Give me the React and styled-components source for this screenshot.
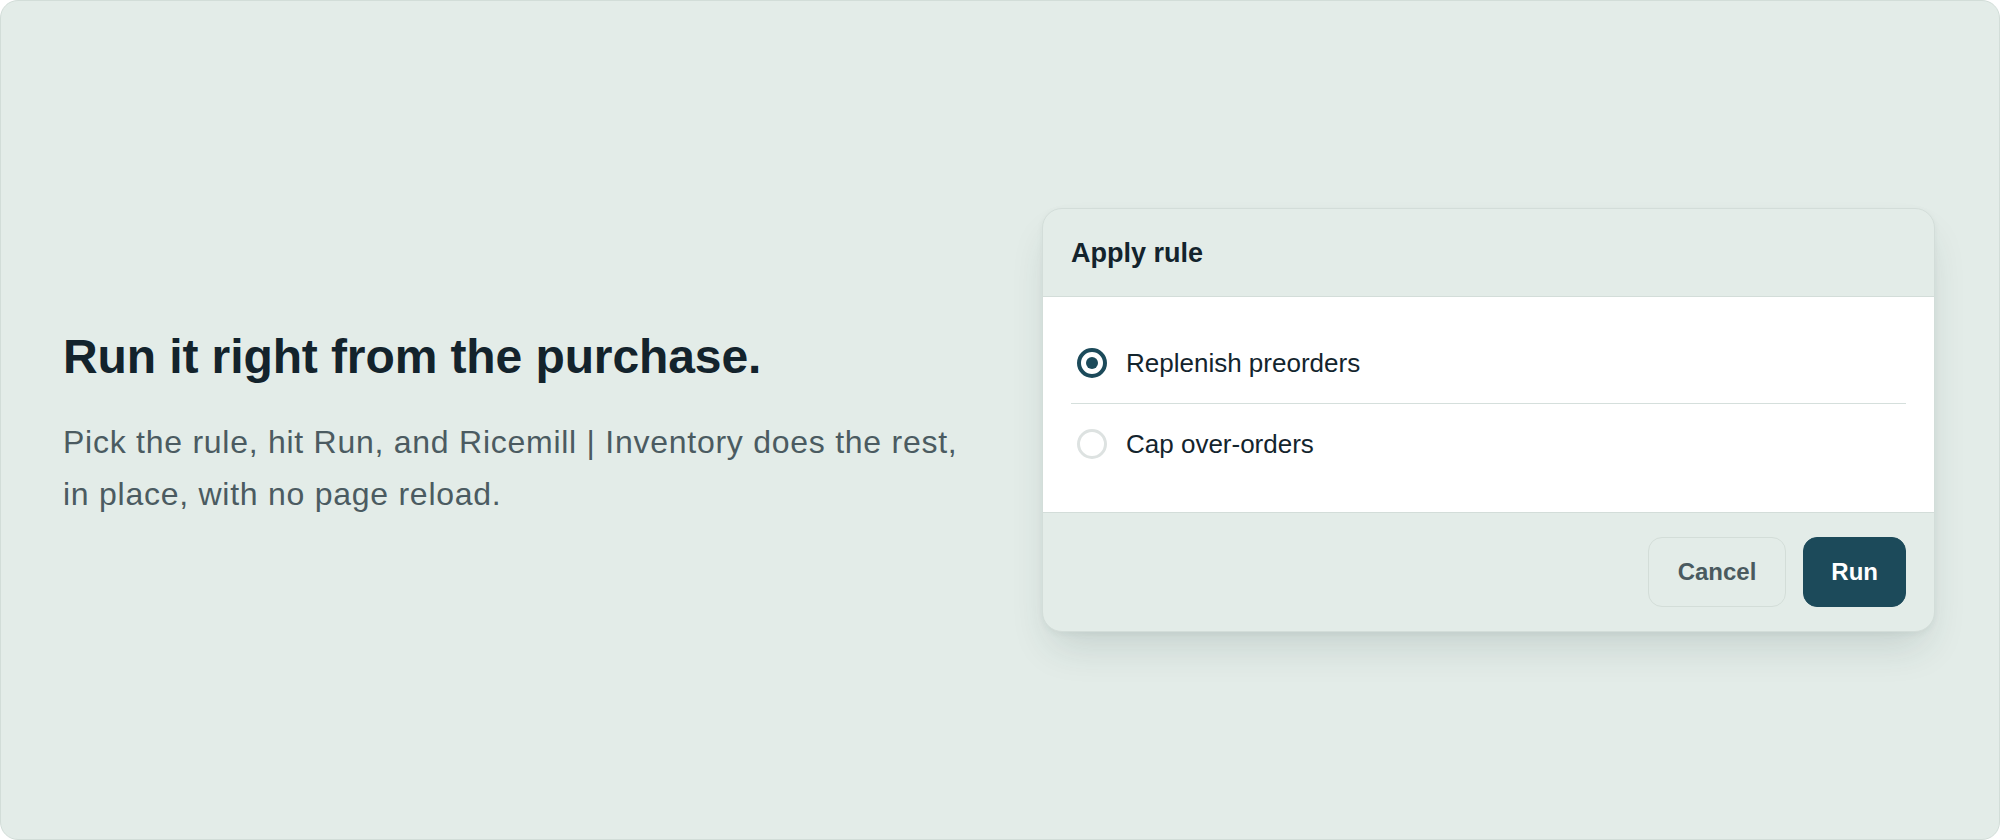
import React, { useState } from 'react'
import styled, { createGlobalStyle } from 'styled-components'

const GlobalStyle = createGlobalStyle`
  html, body {
    margin: 0;
    padding: 0;
    background: #ffffff;
  }
  body {
    font-family: "Liberation Sans", Arial, Helvetica, sans-serif;
    -webkit-font-smoothing: antialiased;
  }
  * {
    box-sizing: border-box;
  }
`

const Page = styled.main`
  width: 2000px;
  height: 840px;
  display: flex;
  align-items: center;
  justify-content: space-between;
  padding: 0 64px 0 62px;
  background: #e3ece8;
  border: 1px solid #d2ddd8;
  border-radius: 18px;
  overflow: hidden;
`

const Copy = styled.section`
  max-width: 920px;
  padding-top: 8px;
`

const Heading = styled.h1`
  margin: 0 0 30px;
  font-size: 48px;
  line-height: 1.2;
  font-weight: 700;
  letter-spacing: -0.1px;
  color: #13232c;
`

const Lead = styled.p`
  margin: 0;
  font-size: 32px;
  line-height: 52px;
  letter-spacing: 0.74px;
  color: #4b5b61;
`

const Dialog = styled.div`
  width: 893px;
  flex-shrink: 0;
  background: #e3ece8;
  border: 1px solid #d3ddd9;
  border-radius: 20px;
  overflow: hidden;
  box-shadow: 0 22px 40px -10px rgba(30, 60, 60, 0.16), 0 2px 6px rgba(30, 60, 60, 0.05);
`

const DialogHeader = styled.header`
  padding: 28px 28px 27px;
  border-bottom: 1px solid #d3ddd9;
`

const DialogTitle = styled.h2`
  margin: 0;
  font-size: 27px;
  line-height: 32px;
  font-weight: 700;
  color: #13232c;
`

const DialogBody = styled.div`
  background: #ffffff;
  padding: 26px 28px 28px;
`

const Option = styled.label`
  display: flex;
  align-items: center;
  gap: 19px;
  height: 80px;
  cursor: pointer;
  font-size: 26px;
  color: #13242d;

  & + & {
    height: 81px;
    border-top: 1px solid #d5dfdc;
  }
`

const Radio = styled.span`
  width: 30px;
  height: 30px;
  margin-left: 6px;
  flex-shrink: 0;
  border-radius: 50%;
  border: ${(p) => (p.$checked ? '4.5px solid #1c4a5a' : '3.5px solid #dde2e1')};
  background: #ffffff;
  display: flex;
  align-items: center;
  justify-content: center;

  &::after {
    content: '';
    width: 12px;
    height: 12px;
    border-radius: 50%;
    background: ${(p) => (p.$checked ? '#1c4a5a' : 'transparent')};
  }
`

const DialogFooter = styled.footer`
  display: flex;
  justify-content: flex-end;
  gap: 17px;
  padding: 24px 28px;
  border-top: 1px solid #d3ddd9;
`

const Button = styled.button`
  height: 70px;
  padding: 0 ${(p) => (p.$primary ? '27px' : '29px')};
  border-radius: 14px;
  font-family: inherit;
  font-size: 24px;
  font-weight: 700;
  cursor: pointer;
  border: 1px solid ${(p) => (p.$primary ? '#1c4a5a' : '#d3ddd8')};
  background: ${(p) => (p.$primary ? '#1c4a5a' : 'transparent')};
  color: ${(p) => (p.$primary ? '#ffffff' : '#4a5a5f')};
`

const rules = ['Replenish preorders', 'Cap over-orders']

export default function App() {
    const [selected, setSelected] = useState(0)

    return (
        <>
            <GlobalStyle />
            <Page>
                <Copy>
                    <Heading>Run it right from the purchase.</Heading>
                    <Lead>
                        Pick the rule, hit Run, and Ricemill | Inventory does the rest,
                        <br />
                        in place, with no page reload.
                    </Lead>
                </Copy>

                <Dialog>
                    <DialogHeader>
                        <DialogTitle>Apply rule</DialogTitle>
                    </DialogHeader>
                    <DialogBody>
                        {rules.map((rule, i) => (
                            <Option key={rule} onClick={() => setSelected(i)}>
                                <Radio $checked={selected === i} />
                                {rule}
                            </Option>
                        ))}
                    </DialogBody>
                    <DialogFooter>
                        <Button>Cancel</Button>
                        <Button $primary>Run</Button>
                    </DialogFooter>
                </Dialog>
            </Page>
        </>
    )
}
